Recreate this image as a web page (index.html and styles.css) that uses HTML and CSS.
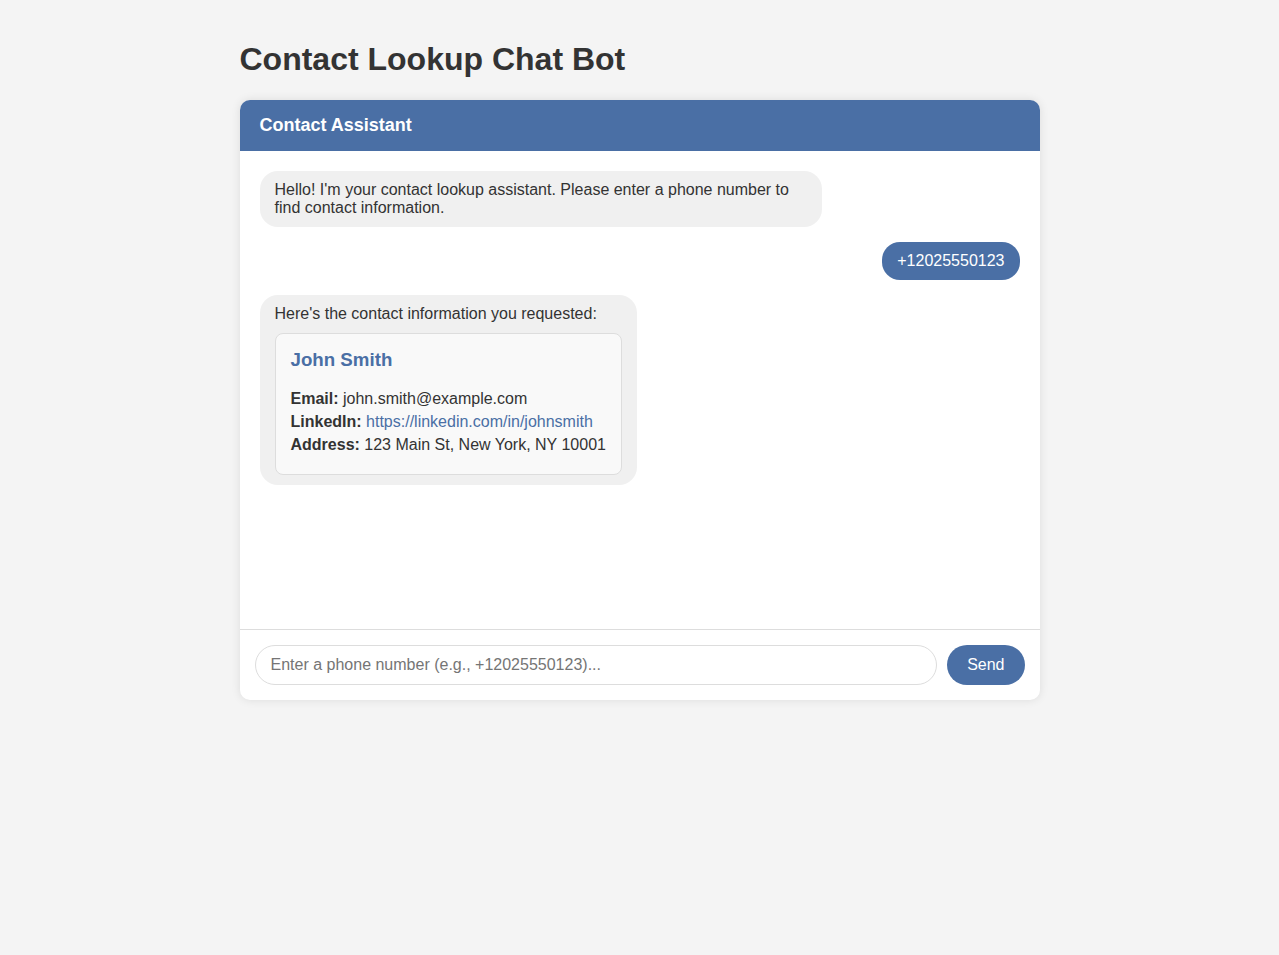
FILE: index.html
```html
<!DOCTYPE html>
<html lang="en">
<head>
<meta charset="utf-8">
<title>Contact Lookup Chat Bot</title>
<link rel="stylesheet" href="styles.css">
</head>
<body>
<div class="container">
  <h1 class="title">Contact Lookup Chat Bot</h1>
  <div class="chat">
    <div class="chat-header">Contact Assistant</div>
    <div class="messages">
      <div class="msg bot">Hello! I'm your contact lookup assistant. Please enter a phone number to find contact information.</div>
      <div class="msg user">+12025550123</div>
      <div class="msg bot">Here's the contact information you requested:
        <div class="contact-card">
          <h3 class="contact-name">John Smith</h3>
          <p class="contact-row"><strong>Email:</strong> john.smith@example.com</p>
          <p class="contact-row"><strong>LinkedIn:</strong> <a class="link" href="#">https://linkedin.com/in/johnsmith</a></p>
          <p class="contact-row"><strong>Address:</strong> 123 Main St, New York, NY 10001</p>
        </div>
      </div>
    </div>
    <div class="input-area">
      <input class="phone-input" type="text" placeholder="Enter a phone number (e.g., +12025550123)...">
      <button class="send-btn">Send</button>
    </div>
  </div>
</div>
</body>
</html>
```

FILE: styles.css
```css
body {
  margin: 0;
  padding: 20px;
  background: #f4f4f4;
  font-family: "Liberation Sans", Arial, sans-serif;
  color: #333;
}
.container {
  max-width: 800px;
  margin: 0 auto;
}
.title {
  font-size: 32px;
  font-weight: bold;
  color: #333;
  margin: 21.44px 0;
}
.chat {
  background: #fff;
  border-radius: 10px;
  box-shadow: 0 0 10px rgba(0, 0, 0, 0.1);
  overflow: hidden;
  height: 600px;
  display: flex;
  flex-direction: column;
}
.chat-header {
  background: #4a6fa5;
  color: #fff;
  padding: 15px 20px;
  font-size: 18px;
  font-weight: bold;
}
.messages {
  flex: 1;
  padding: 20px;
  overflow-y: auto;
  display: flex;
  flex-direction: column;
  align-items: flex-start;
}
.msg {
  padding: 10px 15px;
  border-radius: 18px;
  max-width: 532px;
  margin-bottom: 15px;
  font-size: 16px;
  line-height: 18px;
}
.bot {
  background: #f0f0f0;
  color: #333;
}
.user {
  background: #4a6fa5;
  color: #fff;
  align-self: flex-end;
}
.contact-card {
  margin-top: 10px;
  background: #f9f9f9;
  border: 1px solid #ddd;
  border-radius: 8px;
  padding: 15px;
  line-height: normal;
}
.contact-name {
  margin: 0 0 18.72px;
  color: #4a6fa5;
  font-size: 18.72px;
}
.contact-row {
  margin: 5px 0;
}
.link {
  color: #4a6fa5;
  text-decoration: none;
}
.input-area {
  border-top: 1px solid #ddd;
  padding: 15px;
  display: flex;
  gap: 10px;
}
.phone-input {
  flex: 1;
  height: 40px;
  box-sizing: border-box;
  padding: 10px 15px;
  border: 1px solid #ddd;
  border-radius: 20px;
  font-family: "Liberation Sans", Arial, sans-serif;
  font-size: 16px;
  color: #333;
  outline: none;
}
.phone-input::placeholder {
  color: #757575;
}
.send-btn {
  height: 40px;
  padding: 10px 20px;
  background: #4a6fa5;
  color: #fff;
  border: none;
  border-radius: 20px;
  font-family: "Liberation Sans", Arial, sans-serif;
  font-size: 16px;
}
```
